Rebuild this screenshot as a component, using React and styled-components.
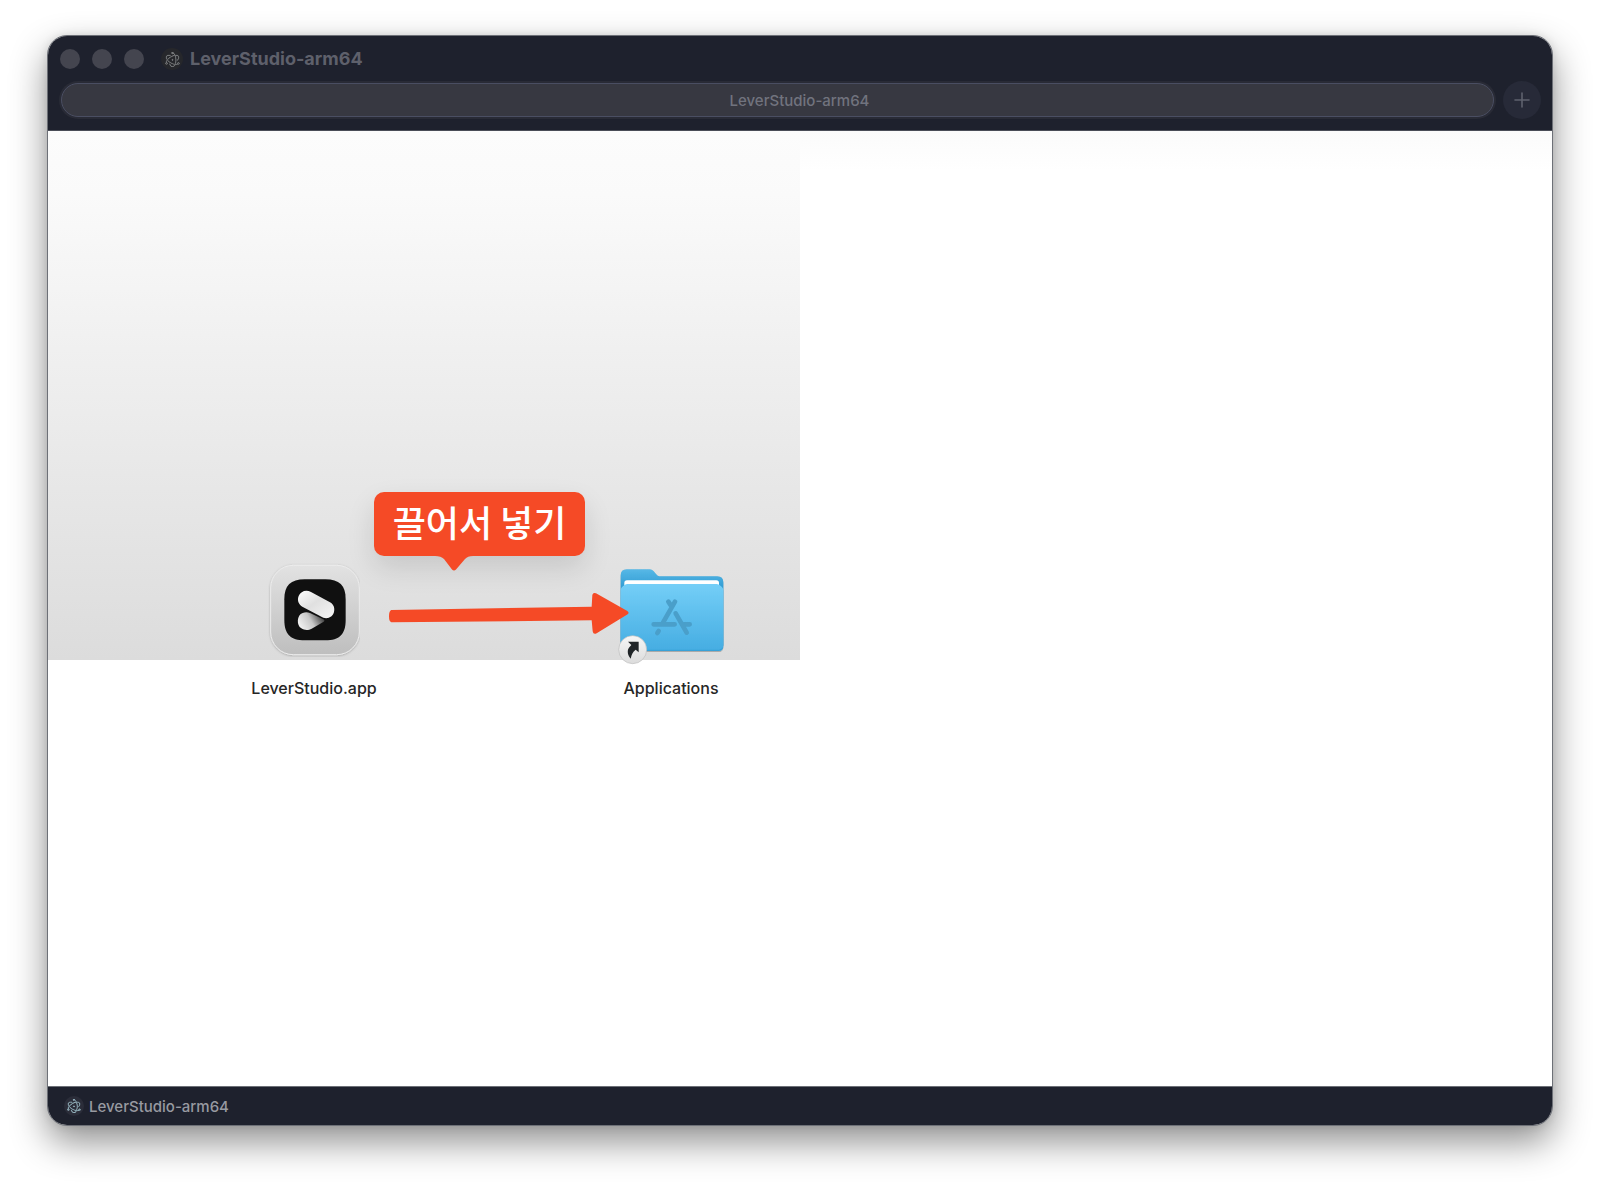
import React from 'react'
import styled, { createGlobalStyle } from 'styled-components';
import { SiElectron } from "react-icons/si";

export default function App() {

  return (
    <>
      <GlobalStyle />
      <Desktop>
        <Window>
          <TitleBar>
            <TitleRow>
              <Light type='button' aria-label='Close' />
              <Light type='button' aria-label='Minimize' />
              <Light type='button' aria-label='Zoom' />
              <VolumeIcon $size={22}><SiElectron size={15} /></VolumeIcon>
              <Title>LeverStudio-arm64</Title>
            </TitleRow>
            <TabRow>
              <Tab type='button'>LeverStudio-arm64</Tab>
              <AddTab type='button' aria-label='New tab'>
                <svg width='16' height='16' viewBox='0 0 16 16' aria-hidden='true'>
                  <path d='M8 1v14M1 8h14' stroke='#5f626e' strokeWidth='1.6' strokeLinecap='round' />
                </svg>
              </AddTab>
            </TabRow>
          </TitleBar>

          <Canvas>
            <Backdrop />
            <Item $x={186} $y={432}>
              <AppIcon />
              <ItemName>LeverStudio.app</ItemName>
            </Item>
            <Item $x={543} $y={432}>
              <FolderIcon />
              <ItemName>Applications</ItemName>
            </Item>
            <Callout>
              끌어서 넣기
              <svg width='38' height='16' viewBox='0 0 38 16' aria-hidden='true'>
                <path d='M0 0h38v1c-4 0-6 1-8 3L21 14.4q-2 2-4 0L9 4C7 2 4 1 0 1z' fill='#f54a26' />
              </svg>
            </Callout>
            <Arrow />
          </Canvas>

          <PathBar>
            <VolumeIcon $size={20} $light><SiElectron size={14} /></VolumeIcon>
            <span>LeverStudio-arm64</span>
          </PathBar>
        </Window>
      </Desktop>
    </>
  )
}

function AppIcon() {
  return (
    <svg width='92' height='94' viewBox='114 69 276 282' aria-hidden='true'>
      <defs>
        <linearGradient id='plate' x1='0' y1='0' x2='0' y2='1'>
          <stop offset='0' stopColor='#e2e2e2' />
          <stop offset='1' stopColor='#bebebe' />
        </linearGradient>
        <linearGradient id='pillTop' x1='0' y1='0' x2='1' y2='1'>
          <stop offset='0' stopColor='#ffffff' />
          <stop offset='0.45' stopColor='#e0e0e0' />
          <stop offset='1' stopColor='#f6f6f6' />
        </linearGradient>
        <linearGradient id='pillLow' x1='0' y1='0.7' x2='1' y2='0.3'>
          <stop offset='0' stopColor='#f4f4f4' />
          <stop offset='0.5' stopColor='#c8c8c8' />
          <stop offset='1' stopColor='#333333' />
        </linearGradient>
        <filter id='plateShadow' x='-10%' y='-10%' width='120%' height='120%'>
          <feDropShadow dx='0' dy='2' stdDeviation='3' floodOpacity='0.25' />
        </filter>
      </defs>
      <rect x='122' y='76' width='266' height='268' rx='68' fill='url(#plate)' stroke='#ececec' strokeWidth='3' filter='url(#plateShadow)' />
      <path d='M224 118h62c42 0 61 18 61 60v62c0 43-19 61-61 61h-62c-42 0-61-18-61-61v-62c0-42 19-60 61-60z' fill='#101010' />
      <path d='M218 219c-18 6-19 37-4 46 10 7 22 6 31 1l36-21q5-4-1-7l-40-19q-11-4-22 0z' fill='url(#pillLow)' />
      <path d='M243 156l57 31c11 6 15 17 12 29-3 13-17 22-32 17l-63-33c-12-7-16-20-11-32 6-14 22-20 37-12z' fill='url(#pillTop)' />
    </svg>
  )
}

function FolderIcon() {
  return (
    <svg width='110' height='104' viewBox='48 39 330 312' aria-hidden='true'>
      <defs>
        <linearGradient id='folderBack' x1='0' y1='0' x2='0' y2='1'>
          <stop offset='0' stopColor='#57b8e6' />
          <stop offset='0.25' stopColor='#2f9bd3' />
          <stop offset='1' stopColor='#2f9bd3' />
        </linearGradient>
        <linearGradient id='folderFront' x1='0' y1='0' x2='0' y2='1'>
          <stop offset='0' stopColor='#74cef7' />
          <stop offset='1' stopColor='#45ade2' />
        </linearGradient>
        <linearGradient id='badge' x1='0' y1='0' x2='0' y2='1'>
          <stop offset='0' stopColor='#f6f6f6' />
          <stop offset='1' stopColor='#dcdcdc' />
        </linearGradient>
        <filter id='folderShadow' x='-10%' y='-10%' width='120%' height='120%'>
          <feDropShadow dx='0' dy='2' stdDeviation='2' floodOpacity='0.35' />
        </filter>
      </defs>
      <g filter='url(#folderShadow)'>
        <path d='M62 76q0-18 18-18h68c8 0 12 4 17 10 7 9 10 11 19 11h168q18 0 18 18v190H62z' fill='url(#folderBack)' />
        <path d='M73 110V99q0-8 8-8h268q8 0 8 8v11z' fill='#ffffff' />
        <path d='M62 121c0-6 3-9 7-12 4-4 7-7 14-7h266c7 0 10 3 14 7 4 3 7 6 7 12v168q0 14-14 14H76q-14 0-14-14z' fill='url(#folderFront)' />
        <path d='M64 293q3 8 12 8h280q9 0 12-8' fill='none' stroke='#2d97cf' strokeWidth='2' />
      </g>
      <g fill='none' stroke='#4a9fca' strokeWidth='14' strokeLinecap='round'>
        <path d='M205 155l8 12M225 155l-36 63M161 223h63M252 223h17M176 243l-4 6' />
        <path d='M227 190l33 58' />
      </g>
      <circle cx='98' cy='299' r='42' fill='url(#badge)' stroke='#bdbdbd' strokeWidth='2' />
      <path d='M84 275h32v32l-9-8c-9 6-12 14-15 27-9-9-12-25-4-34l6-7z' fill='#202427' />
    </svg>
  )
}

function Arrow() {
  return (
    <ArrowSvg width='242' height='46' viewBox='84 330 726 138' aria-hidden='true'>
      <path d='M94 390L695 380L697 345Q699 336 708 340L802 393Q809 398 803 403L710 460Q700 465 698 454L695 421L94 427Q87 425 87 409Q87 392 94 390z' fill='#f54a26' />
    </ArrowSvg>
  )
}

const GlobalStyle = createGlobalStyle`
* {
  box-sizing: border-box;
}
body {
  margin: 0;
  background: #ffffff;
  font-family: Inter, "Noto Sans CJK KR", sans-serif;
}
button {
  padding: 0;
  border: 0;
  font: inherit;
}
svg {
  display: block;
}
`;

const Desktop = styled.div`
display: flex;
min-height: 100vh;
padding: 35px 47px 58px;
overflow: hidden;
`;

const Window = styled.main`
display: flex;
flex: 1;
flex-direction: column;
border: 1px solid #6d7077;
border-radius: 20px;
overflow: hidden;
background: #ffffff;
box-shadow: 0 16px 36px rgba(0, 0, 0, .44), 0 0 8px rgba(0, 0, 0, .1);
`;

const TitleBar = styled.header`
padding: 11px 11px 11px 12px;
background: #1e212d;
border-bottom: 1px solid #4a4d57;
`;

const TitleRow = styled.div`
display: flex;
align-items: center;
gap: 12px;
height: 24px;
`;

const Light = styled.button`
width: 20px;
height: 20px;
border-radius: 50%;
background: #44454f;
`;

const VolumeIcon = styled.span`
display: flex;
align-items: center;
justify-content: center;
width: ${({ $size }) => $size}px;
height: ${({ $size }) => $size}px;
border-radius: 50%;
background: ${({ $light }) => $light ? '#2b2d39' : '#26272b'};
color: ${({ $light }) => $light ? '#b4dde6' : '#929496'};
svg {
  stroke-width: .5px;
}
${TitleRow} & {
  margin-left: 5px;
}
`;

const Title = styled.h1`
margin: 0 0 0 -5px;
color: #5e606b;
font-size: 18px;
font-weight: 700;
line-height: 24px;
`;

const TabRow = styled.div`
display: flex;
align-items: center;
gap: 9px;
margin-top: 10px;
`;

const Tab = styled.button`
flex: 1;
height: 34px;
margin-left: 1px;
padding-left: 44px;
border: 1px solid #4a4e62;
border-radius: 17px;
background: #373841;
box-shadow: 0 0 0 2px #292b36;
color: #71737e;
font-size: 15px;
font-weight: 500;
`;

const AddTab = styled.button`
display: flex;
align-items: center;
justify-content: center;
width: 38px;
height: 38px;
border-radius: 50%;
background: #272a38;
`;

const Canvas = styled.section`
position: relative;
flex: 1;
min-height: 580px;
background: linear-gradient(#fbfbfb, #ffffff 40px);
`;

const Backdrop = styled.div`
width: 50%;
height: 529px;
background: linear-gradient(#fcfcfc, #fafafa 12%, #dcdcdc);
`;

const Item = styled.div`
position: absolute;
left: ${({ $x }) => $x}px;
top: ${({ $y }) => $y}px;
display: flex;
flex-direction: column;
align-items: center;
justify-content: space-between;
width: 160px;
height: 137px;
`;

const ItemName = styled.span`
color: #262626;
font-size: 16px;
font-weight: 500;
line-height: 24px;
`;

const Callout = styled.div`
position: absolute;
left: 326px;
top: 361px;
display: flex;
justify-content: center;
width: 211px;
height: 64px;
padding-top: 5px;
border-radius: 10px;
background: #f54a26;
box-shadow: 0 12px 28px rgba(0, 0, 0, .12);
color: #ffffff;
font-family: "Noto Sans CJK KR", sans-serif;
font-size: 36px;
font-weight: 500;
line-height: 48px;
svg {
  position: absolute;
  left: 61px;
  top: 63px;
}
`;

const ArrowSvg = styled.svg`
position: absolute;
left: 340px;
top: 459px;
`;

const PathBar = styled.footer`
display: flex;
align-items: center;
gap: 5px;
height: 39px;
padding: 0 16px;
border-top: 1px solid #6d7077;
background: #1e212d;
color: #989aa1;
font-size: 15px;
font-weight: 500;
`;
